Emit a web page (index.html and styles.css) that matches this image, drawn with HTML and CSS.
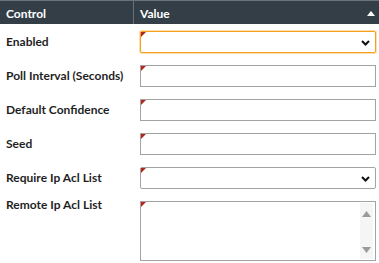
FILE: index.html
```html
<!DOCTYPE html>
<html>
<head>
<meta charset="utf-8">
<link rel="stylesheet" href="styles.css">
</head>
<body>
<div class="grid">
  <div class="head head-control">Control</div>
  <div class="head head-value"><span>Value</span>
    <svg class="sort" width="8" height="5" viewBox="0 0 8 5"><path d="M0 5 L4 0 L8 5 Z" fill="#fff"/></svg>
  </div>

  <div class="label">Enabled</div>
  <div class="cell"><div class="field select focus"><span class="flag"></span><svg class="chev" width="9" height="6" viewBox="0 0 9 6"><path d="M1 1 L4.5 4.5 L8 1" fill="none" stroke="#111" stroke-width="2"/></svg></div></div>

  <div class="label">Poll Interval (Seconds)</div>
  <div class="cell"><div class="field"><span class="flag"></span></div></div>

  <div class="label">Default Confidence</div>
  <div class="cell"><div class="field"><span class="flag"></span></div></div>

  <div class="label">Seed</div>
  <div class="cell"><div class="field"><span class="flag"></span></div></div>

  <div class="label">Require Ip Acl List</div>
  <div class="cell"><div class="field select"><span class="flag"></span><svg class="chev" width="9" height="6" viewBox="0 0 9 6"><path d="M1 1 L4.5 4.5 L8 1" fill="none" stroke="#111" stroke-width="2"/></svg></div></div>

  <div class="label label-top">Remote Ip Acl List</div>
  <div class="cell"><div class="field area"><span class="flag"></span>
    <div class="area-body"></div>
    <div class="scroll">
      <svg width="9" height="6" viewBox="0 0 9 6"><path d="M0 6 L4.5 0 L9 6 Z" fill="#9a9a9a"/></svg>
      <svg width="9" height="6" viewBox="0 0 9 6"><path d="M0 0 L4.5 6 L9 0 Z" fill="#9a9a9a"/></svg>
    </div>
  </div></div>
</div>
</body>
</html>
```
FILE: styles.css
```css
html, body {
  margin: 0;
  padding: 0;
  background: #fff;
}
body {
  font-family: "Lato", "Liberation Sans", sans-serif;
  width: 379px;
  height: 263px;
  overflow: hidden;
}
.grid {
  display: grid;
  grid-template-columns: 134px 245px;
  grid-auto-rows: 34px;
  grid-template-rows: 24px;
}
.head {
  background: #333e47;
  color: #fff;
  font-weight: 700;
  font-size: 12px;
  display: flex;
  align-items: center;
  border-top: 1px solid #6a7379;
  box-sizing: border-box;
  padding-top: 1px;
}
.head-control {
  padding-left: 6px;
  border-right: 1px solid #66707a;
}
.head-value {
  padding-left: 6px;
  padding-right: 4px;
  justify-content: space-between;
}
.sort {
  margin-top: 1px;
}
.label {
  font-size: 12px;
  font-weight: 700;
  color: #1f1f1f;
  padding: 7px 0 0 6px;
  line-height: 22px;
  white-space: nowrap;
}
.label-top {
  padding-top: 0;
}
.cell {
  padding: 7px 3px 0 6px;
}
.field {
  position: relative;
  box-sizing: border-box;
  height: 22px;
  border: 1px solid #a3a3a3;
  background: #fff;
  display: flex;
  align-items: center;
  justify-content: flex-end;
  padding-right: 5px;
}
.field.focus {
  border: 1px solid #f7a01c;
  box-shadow: 0 0 0 1px rgba(247,160,28,0.35);
  border-radius: 2px;
}
.select {
  border-radius: 2px;
}
.flag {
  position: absolute;
  left: 0;
  top: 0;
  width: 0;
  height: 0;
  border-top: 5px solid #b3261e;
  border-right: 5px solid transparent;
}
.chev {
  margin-top: 1px;
}
.area {
  height: 60px;
  align-items: stretch;
  padding: 1px 2px 1px 0;
}
.area-body {
  flex: 1;
}
.scroll {
  width: 13px;
  background: #f5f5f5;
  display: flex;
  flex-direction: column;
  justify-content: space-between;
  align-items: center;
  padding: 8px 0 6px;
}
```
